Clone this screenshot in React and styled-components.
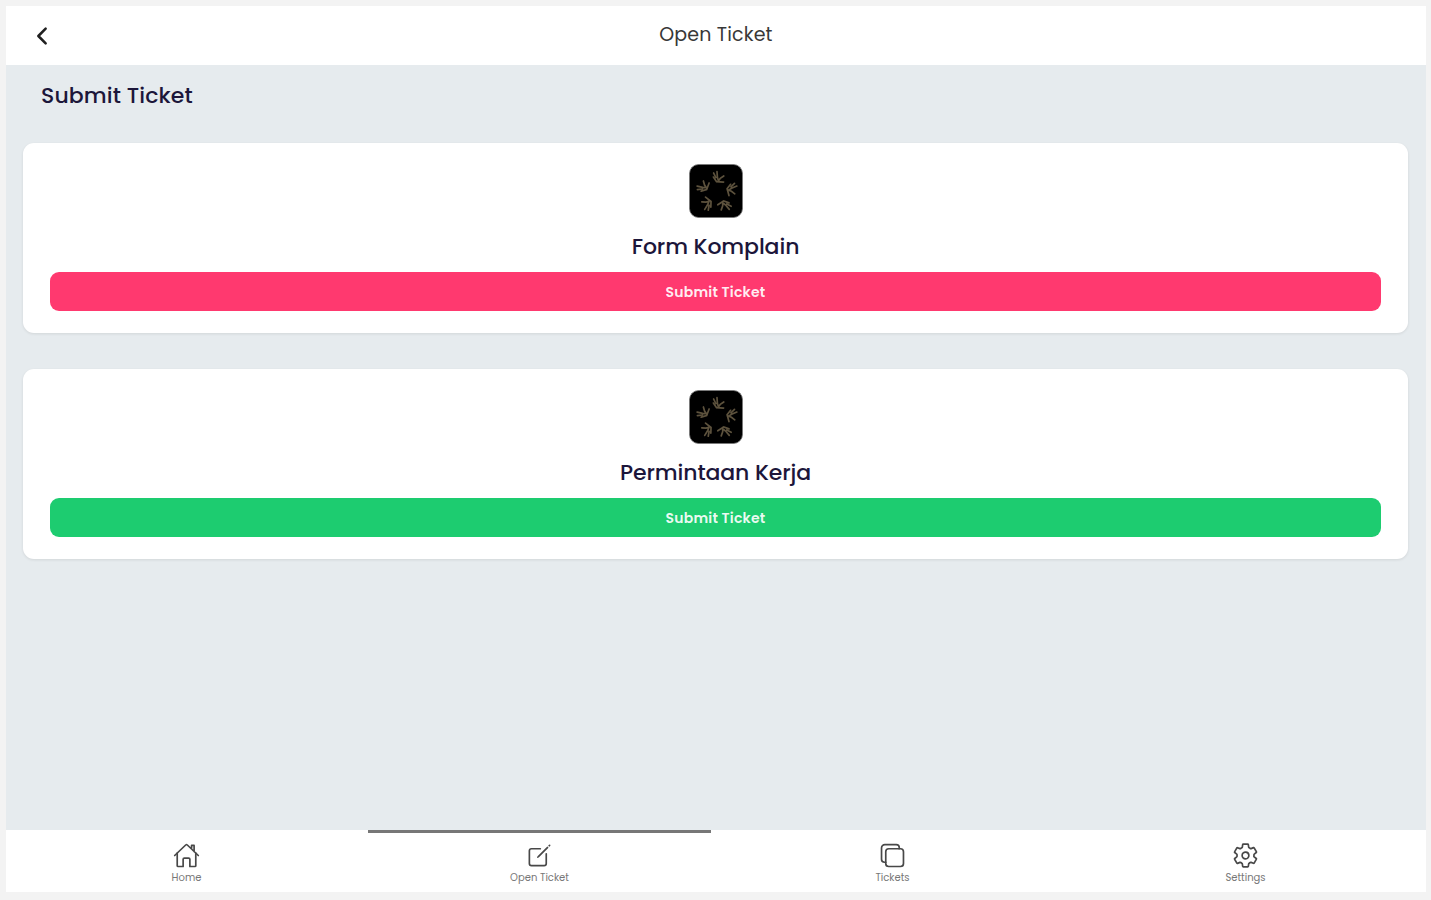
import React from 'react';
import styled, { createGlobalStyle } from 'styled-components';
import {
  IoChevronBackOutline,
  IoHomeOutline,
  IoCreateOutline,
  IoCopyOutline,
  IoSettingsOutline,
} from 'react-icons/io5';

const forms = [
  { title: 'Form Komplain', color: '#ff396f' },
  { title: 'Permintaan Kerja', color: '#1dcc70' },
];

const tabs = [
  { label: 'Home', icon: IoHomeOutline },
  { label: 'Open Ticket', icon: IoCreateOutline, active: true },
  { label: 'Tickets', icon: IoCopyOutline },
  { label: 'Settings', icon: IoSettingsOutline },
];

const Logo = () => (
  <LogoBox viewBox="0 0 54 54">
    <rect x="0.5" y="0.5" width="53" height="53" rx="9" fill="#000" stroke="#777" strokeWidth="0.8" />
    {[11, 83, 155, 227, 299].map((angle) => (
      <g
        key={angle}
        transform={`rotate(${angle} 28 28.5)`}
        fill="none"
        stroke="#5d523d"
        strokeWidth="1.7"
        strokeLinecap="round"
      >
        <path d="M21.5 14l4 4 7-1M24 8l1.5 5.5 2 4M31.5 11l-3 3-2 4M21 10l3 4" />
      </g>
    ))}
  </LogoBox>
);

const App = () => {
  return (
    <>
      <GlobalStyle />
      <Screen>
        <Header>
          <BackButton aria-label="Back">
            <IoChevronBackOutline />
          </BackButton>
          <PageTitle>Open Ticket</PageTitle>
        </Header>

        <Content>
          <SectionTitle>Submit Ticket</SectionTitle>
          {forms.map((form) => (
            <Card key={form.title}>
              <Logo />
              <CardTitle>{form.title}</CardTitle>
              <SubmitButton $color={form.color}>Submit Ticket</SubmitButton>
            </Card>
          ))}
        </Content>

        <BottomMenu>
          {tabs.map(({ label, icon: Icon, active }) => (
            <MenuItem key={label} href="#" $active={active}>
              <Icon />
              <span>{label}</span>
            </MenuItem>
          ))}
        </BottomMenu>
      </Screen>
    </>
  );
};

const GlobalStyle = createGlobalStyle`
  * {
    box-sizing: border-box;
  }

  body {
    margin: 0;
    background: #f3f3f3;
    font-family: Poppins, Inter, 'Liberation Sans', sans-serif;
  }
`;

const Screen = styled.div`
  display: flex;
  flex-direction: column;
  height: 900px;
  padding: 6px 5px 8px 6px;
`;

const Header = styled.header`
  display: grid;
  grid-template-columns: 72px 1fr 72px;
  align-items: center;
  height: 59px;
  background: #fff;
`;

const BackButton = styled.button`
  display: flex;
  justify-content: center;
  padding: 0;
  border: none;
  background: none;
  color: #202020;
  font-size: 26px;
  cursor: pointer;

  path {
    stroke-width: 50px;
  }
`;

const PageTitle = styled.h1`
  margin: 0;
  padding-bottom: 1px;
  color: #383838;
  font-size: 19px;
  font-weight: 400;
  line-height: 28px;
  letter-spacing: 0.15px;
  text-align: center;
`;

const Content = styled.main`
  flex: 1;
  padding: 14px 18px 0 17px;
  background: #e6ebee;
`;

const SectionTitle = styled.h2`
  margin: 0 0 31px;
  padding-left: 18px;
  color: #1c163a;
  font-size: 22px;
  font-weight: 500;
  line-height: 33px;
  letter-spacing: 0.1px;
`;

const Card = styled.section`
  display: flex;
  flex-direction: column;
  align-items: center;
  height: 190px;
  margin-bottom: 36px;
  padding: 21px 27px 0;
  border-radius: 11px;
  background: #fff;
  box-shadow: 0 1px 3px rgba(0, 0, 0, 0.09);
`;

const LogoBox = styled.svg`
  display: block;
  width: 54px;
  height: 54px;
  flex-shrink: 0;
`;

const CardTitle = styled.h3`
  margin: 13px 0 9px;
  color: #1c163a;
  font-size: 22px;
  font-weight: 500;
  line-height: 32px;
  letter-spacing: -0.1px;
`;

const SubmitButton = styled.button`
  width: 100%;
  height: 39px;
  padding: 2px 0 0;
  border: none;
  border-radius: 9px;
  background: ${(props) => props.$color};
  color: rgba(255, 255, 255, 0.92);
  font-family: inherit;
  font-size: 14px;
  font-weight: 600;
  letter-spacing: 0.2px;
  cursor: pointer;
`;

const BottomMenu = styled.nav`
  display: grid;
  grid-template-columns: repeat(4, 1fr);
  height: 62px;
  padding: 0 4px;
  background: #fff;
`;

const MenuItem = styled.a`
  display: flex;
  flex-direction: column;
  align-items: center;
  margin: 0 5px;
  padding-top: 9px;
  border-top: 3px solid ${(props) => (props.$active ? '#777' : 'transparent')};
  color: #484848;
  text-decoration: none;

  svg {
    width: 27px;
    height: 27px;
  }

  span {
    margin-top: 2px;
    color: #777;
    font-size: 10px;
    line-height: 13px;
  }
`;

export default App;
